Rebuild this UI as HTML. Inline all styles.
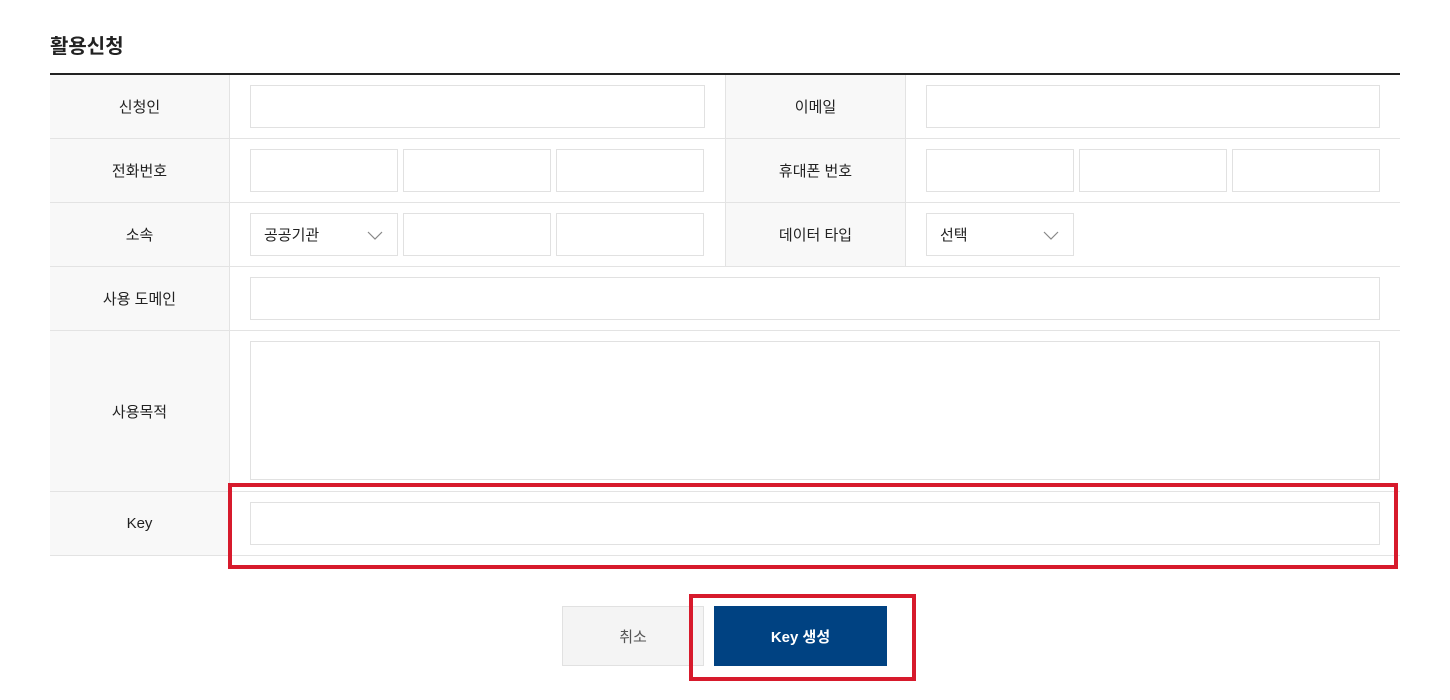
<!DOCTYPE html>
<html><head><meta charset="utf-8"><style>
*{margin:0;padding:0;box-sizing:border-box}
body{width:1450px;height:700px;background:#fff;position:relative;font-family:"Liberation Sans","Noto Sans CJK KR",sans-serif;color:#222;overflow:hidden}
.a{position:absolute}
.lab{position:absolute;background:#f8f8f8;display:flex;align-items:center;justify-content:center;font-size:15px;color:#222}
.in{position:absolute;border:1px solid #e1e1e1;background:#fff;height:43px}
.hl{position:absolute;left:50px;width:1350px;height:1px;background:#e3e3e3}
.vl{position:absolute;width:1px;background:#e3e3e3}
.sel{display:flex;align-items:center;padding-left:13px;font-size:15px}
.sel svg{position:absolute;right:14px;top:16px}
</style></head><body>
<div class="a" style="left:50px;top:30px;font-size:20px;font-weight:bold;color:#222">활용신청</div>
<div class="a" style="left:50px;top:73px;width:1350px;height:2px;background:#222"></div>

<div class="lab" style="left:50px;top:75px;width:179px;height:63px">신청인</div>
<div class="lab" style="left:726px;top:75px;width:179px;height:63px">이메일</div>
<div class="lab" style="left:50px;top:139px;width:179px;height:63px">전화번호</div>
<div class="lab" style="left:726px;top:139px;width:179px;height:63px">휴대폰 번호</div>
<div class="lab" style="left:50px;top:203px;width:179px;height:63px">소속</div>
<div class="lab" style="left:726px;top:203px;width:179px;height:63px">데이터 타입</div>
<div class="lab" style="left:50px;top:267px;width:179px;height:63px">사용 도메인</div>
<div class="lab" style="left:50px;top:331px;width:179px;height:160px">사용목적</div>
<div class="lab" style="left:50px;top:492px;width:179px;height:63px">Key</div>

<div class="hl" style="top:138px"></div>
<div class="hl" style="top:202px"></div>
<div class="hl" style="top:266px"></div>
<div class="hl" style="top:330px"></div>
<div class="hl" style="top:491px"></div>
<div class="hl" style="top:555px"></div>
<div class="vl" style="left:229px;top:75px;height:480px"></div>
<div class="vl" style="left:725px;top:75px;height:191px"></div>
<div class="vl" style="left:905px;top:75px;height:191px"></div>

<div class="in" style="left:250px;top:85px;width:455px"></div>
<div class="in" style="left:926px;top:85px;width:454px"></div>
<div class="in" style="left:250px;top:149px;width:148px"></div>
<div class="in" style="left:403px;top:149px;width:148px"></div>
<div class="in" style="left:556px;top:149px;width:148px"></div>
<div class="in" style="left:926px;top:149px;width:148px"></div>
<div class="in" style="left:1079px;top:149px;width:148px"></div>
<div class="in" style="left:1232px;top:149px;width:148px"></div>
<div class="in sel" style="left:250px;top:213px;width:148px">공공기관<svg width="16" height="10" viewBox="0 0 16 10"><path d="M1 2l7 7 7-7" fill="none" stroke="#888" stroke-width="1.2"/></svg></div>
<div class="in" style="left:403px;top:213px;width:148px"></div>
<div class="in" style="left:556px;top:213px;width:148px"></div>
<div class="in sel" style="left:926px;top:213px;width:148px">선택<svg width="16" height="10" viewBox="0 0 16 10"><path d="M1 2l7 7 7-7" fill="none" stroke="#888" stroke-width="1.2"/></svg></div>
<div class="in" style="left:250px;top:277px;width:1130px"></div>
<div class="in" style="left:250px;top:341px;width:1130px;height:139px"></div>
<div class="in" style="left:250px;top:502px;width:1130px"></div>

<div class="a" style="left:228px;top:483px;width:1170px;height:86px;border:4px solid #d71a2c"></div>

<div class="a" style="left:562px;top:606px;width:142px;height:60px;background:#f4f4f4;border:1px solid #e1e1e1;display:flex;align-items:center;justify-content:center;font-size:15px;color:#555">취소</div>
<div class="a" style="left:714px;top:606px;width:173px;height:60px;background:#004282;display:flex;align-items:center;justify-content:center;font-size:15px;font-weight:bold;color:#fff">Key 생성</div>
<div class="a" style="left:689px;top:594px;width:227px;height:87px;border:4px solid #d71a2c"></div>
</body></html>
